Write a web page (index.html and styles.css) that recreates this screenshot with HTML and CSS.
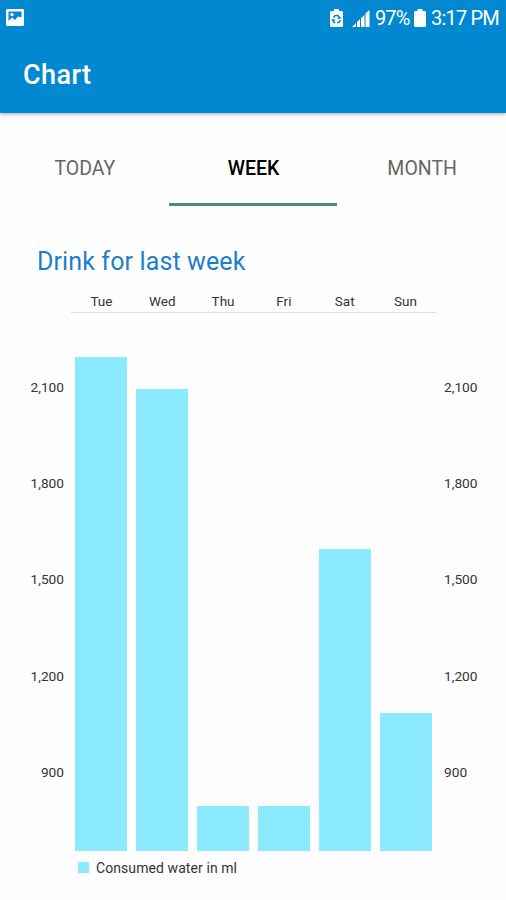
FILE: index.html
```html
<!DOCTYPE html>
<html lang="en">
<head>
    <meta charset="UTF-8">
    <meta name="viewport" content="width=device-width, initial-scale=1.0">
    <title>Chart</title>
    <link rel="stylesheet" href="styles.css">
</head>
<body>

<header class="app-bar">
    <div class="status-bar">
        <svg class="icon-picture" width="18" height="17" viewBox="0 0 18 17">
            <path fill="#fff" fill-rule="evenodd" d="M1 0h16l1 1v15l-1 1H1l-1-1V1zM2.500 2.500v9.500l3.500-3.500 3 2.500 3-3.500 3.500 1V2.500z"/>
            <circle cx="6" cy="5.500" r="1.700" fill="#fff"/>
        </svg>
        <div class="status-right">
            <svg class="icon-saver" width="13" height="18" viewBox="0 0 13 18">
                <path fill="#fff" d="M4 0h5v2h3l1 1v14l-1 1H1l-1-1V3l1-1h3z"/>
                <path fill="none" stroke="#0288d1" stroke-width="1.500" d="M3.500 8.500l1.500-2h3l2 2.500H7.500M10.500 11l-1.500 2.500H7M5.500 13.500H4L2.500 11H5"/>
            </svg>
            <svg class="icon-signal" width="18" height="17" viewBox="0 0 18 17">
                <path fill="#fff" d="M0 17l4-4v4zM5 12l3-3v8H5zM9 8l3.500-3v12H9zM13.500 3.500L17.500 0v17h-4z"/>
            </svg>
            <span class="percent">97%</span>
            <svg class="icon-battery" width="12" height="18" viewBox="0 0 12 18">
                <path fill="#fff" d="M3.500 0h5v2H11l1 1v14l-1 1H1l-1-1V3l1-1h2.500z"/>
            </svg>
            <span class="time">3:17 PM</span>
        </div>
    </div>
    <h1>Chart</h1>
</header>

<nav class="tabs">
    <a class="tab">TODAY</a>
    <a class="tab active">WEEK</a>
    <a class="tab">MONTH</a>
</nav>

<main class="content">
    <h2>Drink for last week</h2>

    <div class="days">
        <span>Tue</span>
        <span>Wed</span>
        <span>Thu</span>
        <span>Fri</span>
        <span>Sat</span>
        <span>Sun</span>
    </div>

    <div class="chart">
        <div class="axis axis-left">
            <span>2,100</span>
            <span>1,800</span>
            <span>1,500</span>
            <span>1,200</span>
            <span>900</span>
        </div>
        <div class="bars">
            <div class="bar" style="height: 493.500px"></div>
            <div class="bar" style="height: 461.500px"></div>
            <div class="bar" style="height: 45px"></div>
            <div class="bar" style="height: 45px"></div>
            <div class="bar" style="height: 302px"></div>
            <div class="bar" style="height: 138px"></div>
        </div>
        <div class="axis axis-right">
            <span>2,100</span>
            <span>1,800</span>
            <span>1,500</span>
            <span>1,200</span>
            <span>900</span>
        </div>
    </div>

    <div class="legend">
        <span class="swatch"></span>
        <span>Consumed water in ml</span>
    </div>
</main>

</body>
</html>
```
FILE: styles.css
```css
* {
    box-sizing: border-box;
}
body {
    margin: 0;
    font-family: Roboto, sans-serif;
    background-color: #fefefe;
    height: 900px;
    overflow: hidden;
}
.app-bar {
    height: 113px;
    background-color: #0288d1;
    color: white;
    box-shadow: 0 1px 4px rgba(0, 0, 0, 0.35);
}
.status-bar {
    height: 37px;
    padding: 0 7px 0 6px;
    display: flex;
    justify-content: space-between;
    align-items: center;
}
.icon-picture {
    margin-bottom: 3px;
}
.status-right {
    display: flex;
    align-items: center;
    font-size: 20px;
    line-height: 37px;
    white-space: nowrap;
}
.icon-saver {
    margin-bottom: 2px;
}
.icon-signal {
    margin: 0 5px 0 9px;
}
.icon-battery {
    margin-bottom: 2px;
}
.percent {
    width: 35px;
    margin-right: 4px;
    letter-spacing: -0.9px;
}
.time {
    width: 68px;
    margin-left: 5px;
    letter-spacing: -0.8px;
}
h1 {
    margin: 0;
    padding: 20px 0 0 23px;
    font-size: 27px;
    line-height: 36px;
    font-weight: 500;
    letter-spacing: 0.4px;
}
.tabs {
    display: flex;
    height: 93px;
}
.tab {
    flex: 1;
    padding: 43px 0 0 1px;
    text-align: center;
    font-size: 19.5px;
    line-height: 25px;
    color: #666;
    border-bottom: 3px solid transparent;
}
.tab.active {
    color: black;
    font-weight: 500;
    border-bottom-color: #528977;
}
h2 {
    margin: 0;
    padding: 38px 0 0 37px;
    height: 72px;
    font-size: 25px;
    line-height: 36px;
    font-weight: 400;
    letter-spacing: 0.12px;
    color: #1c7fcb;
}
.days {
    display: flex;
    height: 35px;
    margin: 0 70px 0 71px;
    padding-top: 15px;
    border-bottom: 1px solid #ddd;
    font-size: 13.5px;
    line-height: 16px;
    color: #333;
}
.days span {
    flex: 1;
    text-align: center;
}
.chart {
    display: flex;
    height: 537.5px;
}
.axis {
    padding-top: 26px;
    font-size: 13.7px;
    line-height: 96.2px;
    color: #333;
}
.axis span {
    display: block;
}
.axis-left {
    width: 71px;
    padding-right: 7px;
    text-align: right;
}
.axis-right {
    width: 70px;
    padding-left: 8px;
}
.bars {
    flex: 1;
    display: flex;
    align-items: flex-end;
    justify-content: space-around;
}
.bar {
    width: 52px;
    background-color: #8ceaff;
}
.legend {
    display: flex;
    align-items: center;
    padding: 8px 0 0 78px;
    font-size: 14px;
    line-height: 18px;
    letter-spacing: 0.08px;
    color: #333;
}
.swatch {
    width: 11px;
    height: 11px;
    margin-right: 7px;
    background-color: #8ceaff;
}
```
